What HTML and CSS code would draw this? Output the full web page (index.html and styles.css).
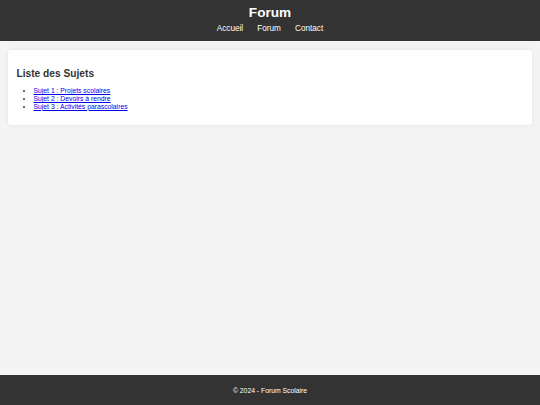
FILE: index.html
```html
<!DOCTYPE html>
<html lang="fr">
<head>
<meta charset="utf-8">
<title>Forum Scolaire</title>
<link rel="stylesheet" href="styles.css">
</head>
<body>
<header class="site-header">
  <h1 class="site-title">Forum</h1>
  <nav class="site-nav">
    <a href="#">Accueil</a>
    <a href="#">Forum</a>
    <a href="#">Contact</a>
  </nav>
</header>
<main class="content">
  <section class="card">
    <h2 class="card-title">Liste des Sujets</h2>
    <ul class="topics">
      <li><a href="#">Sujet 1 : Projets scolaires</a></li>
      <li><a href="#">Sujet 2 : Devoirs à rendre</a></li>
      <li><a href="#">Sujet 3 : Activités parascolaires</a></li>
    </ul>
  </section>
</main>
<footer class="site-footer">
  <p>© 2024 - Forum Scolaire</p>
</footer>
</body>
</html>
```

FILE: styles.css
```css
html, body {
  margin: 0;
  padding: 0;
}
body {
  font-family: "Liberation Sans", Arial, sans-serif;
  font-size: 6.8px;
  background: #f4f4f4;
  color: #333;
  min-height: 405px;
}
.site-header {
  background: #333;
  color: #fff;
  text-align: center;
  height: 41px;
  box-sizing: border-box;
  padding-top: 4.5px;
}
.site-title {
  margin: 0;
  font-size: 13.6px;
  font-weight: bold;
  line-height: 15.6px;
}
.site-nav {
  margin-top: 3.5px;
  font-size: 8.2px;
  line-height: 9.4px;
}
.site-nav a {
  color: #fff;
  text-decoration: none;
  margin: 0 5.9px;
}
.content {
  padding: 9px 8.5px 0 8px;
}
.card {
  background: #fff;
  border-radius: 3px;
  padding: 8.5px;
  box-shadow: 0 0 4px rgba(0, 0, 0, 0.08);
}
.card-title {
  font-size: 10.2px;
  margin: 9.2px 0 8.6px;
}
.topics {
  margin: 6.8px 0 6px;
  padding-left: 17px;
  line-height: 7.8px;
}
.topics a {
  color: #0000ee;
}
.site-footer {
  position: fixed;
  left: 0;
  right: 0;
  bottom: 0;
  height: 30px;
  background: #333;
  color: #fff;
  text-align: center;
  display: flex;
  align-items: center;
  justify-content: center;
}
.site-footer p {
  margin: 0;
  font-size: 6.8px;
}
```
